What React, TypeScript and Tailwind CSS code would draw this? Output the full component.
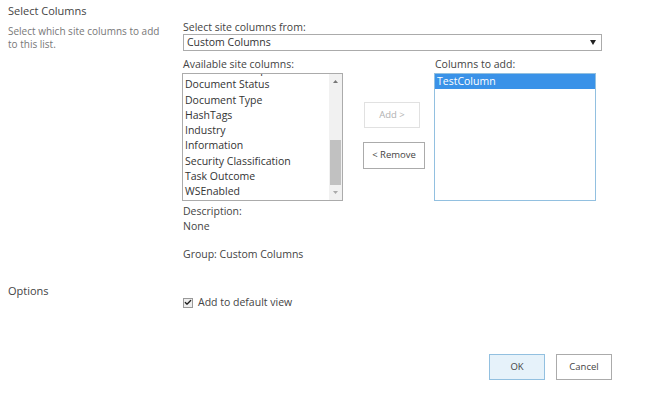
import { Check } from 'lucide-react'

const available = [
  'Document Template',
  'Document Status',
  'Document Type',
  'HashTags',
  'Industry',
  'Information',
  'Security Classification',
  'Task Outcome',
  'WSEnabled',
]

export default function App() {
  return (
    <div
      className="w-[650px] h-[395px] bg-white text-[#444] text-[10.5px] overflow-hidden"
      style={{ fontFamily: '"Open Sans", "Noto Sans", sans-serif' }}
    >
      {/* Select Columns section */}
      <div className="flex pt-[3px]">
        <div className="w-[183px] shrink-0 pl-[8px] pr-[16px]">
          <div className="text-[11px] leading-[16px] text-[#444]">Select Columns</div>
          <div className="mt-[6px] text-[10px] leading-[13px] text-[#777]">
            Select which site columns to add to this list.
          </div>
        </div>

        <div className="w-[420px] pt-[16px]">
          <div className="leading-[16px]">Select site columns from:</div>
          <div className="mt-[-1px] h-[17px] w-[419px] border border-[#ababab] flex items-center justify-between pl-[3px] pr-[5px]">
            <span className="text-[#333]">Custom Columns</span>
            <svg width="6" height="5" viewBox="0 0 6 5">
              <path d="M0 0h6L3 5z" fill="#222" />
            </svg>
          </div>

          <div className="flex mt-[5px]">
            {/* available list */}
            <div className="w-[161px] -ml-[1px]">
              <div className="leading-[16px] pl-[1px]">Available site columns:</div>
              <div className="mt-[1px] h-[128px] border border-[#ababab] flex overflow-hidden">
                <div className="flex-1 overflow-hidden pl-[2px]">
                  <div className="-mt-[12px] text-[#333]">
                    {available.map((item) => (
                      <div key={item} className="leading-[15.3px] whitespace-nowrap">
                        {item}
                      </div>
                    ))}
                  </div>
                </div>
                <div className="w-[13px] bg-[#f1f1f1] flex flex-col items-center">
                  <svg width="5" height="3" viewBox="0 0 5 3" className="mt-[6px]">
                    <path d="M0 3h5L2.5 0z" fill="#777" />
                  </svg>
                  <div className="w-[11px] h-[45px] bg-[#c1c1c1] mt-[57px]" />
                  <svg width="5" height="3" viewBox="0 0 5 3" className="mt-[6px]">
                    <path d="M0 0h5L2.5 3z" fill="#aaa" />
                  </svg>
                </div>
              </div>
              <div className="mt-[3px] leading-[15px] pl-[1px]">Description:</div>
              <div className="leading-[15px] pl-[1px]">None</div>
              <div className="mt-[13px] leading-[15px] pl-[1px]">Group: Custom Columns</div>
            </div>

            {/* buttons */}
            <div className="w-[91px] flex flex-col items-start pl-[20px] pt-[46px]">
              <div className="ml-[1px] w-[56px] h-[26px] border border-[#e1e1e1] flex items-center justify-center text-[9.5px] text-[#b1b1b1]">
                Add &gt;
              </div>
              <div className="mt-[14px] w-[62px] h-[27px] border border-[#ababab] flex items-center justify-center text-[9.5px] text-[#444]">
                &lt; Remove
              </div>
            </div>

            {/* columns to add */}
            <div className="w-[162px]">
              <div className="leading-[16px] pl-[1px]">Columns to add:</div>
              <div className="mt-[1px] h-[128px] border border-[#92c0e0]">
                <div className="bg-[#3a92e8] text-white leading-[15px] pl-[2px]">TestColumn</div>
              </div>
            </div>
          </div>
        </div>
      </div>

      {/* Options section */}
      <div className="flex mt-[21px]">
        <div className="w-[183px] shrink-0 pl-[8px] text-[11px] leading-[16px]">Options</div>
        <div className="pt-[12px] flex items-center gap-[5px]">
          <span className="w-[10px] h-[10px] border border-[#999] bg-[#eee] flex items-center justify-center">
            <Check className="w-[9px] h-[9px] text-[#222]" strokeWidth={4} />
          </span>
          <span className="leading-[15px]">Add to default view</span>
        </div>
      </div>

      {/* footer buttons */}
      <div className="flex justify-end gap-[11px] pr-[38px] mt-[44px]">
        <div className="w-[56px] h-[26px] border border-[#92c0e0] bg-[#e6f2fa] flex items-center justify-center text-[9.5px]">
          OK
        </div>
        <div className="w-[56px] h-[26px] border border-[#ababab] flex items-center justify-center text-[9.5px]">
          Cancel
        </div>
      </div>
    </div>
  )
}
